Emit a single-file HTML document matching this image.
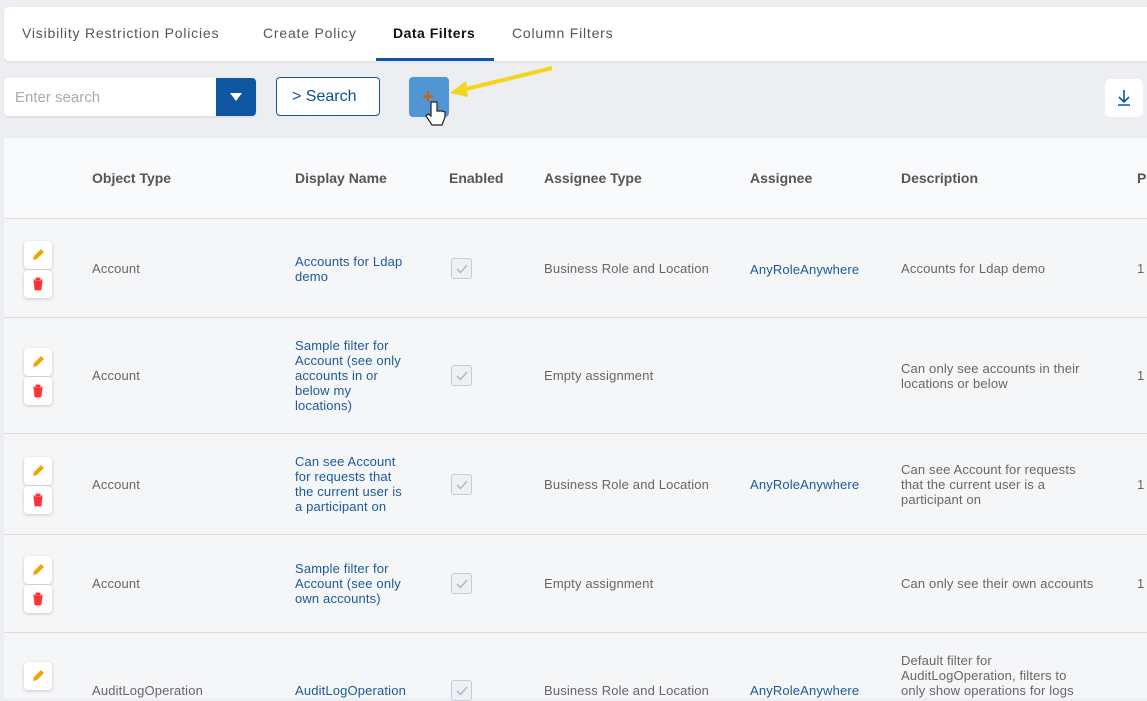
<!DOCTYPE html>
<html><head><meta charset="utf-8"><style>
*{box-sizing:border-box;margin:0;padding:0}
body{width:1147px;height:691px;overflow:hidden;background:#eceef2;font-family:"Liberation Sans",sans-serif;position:relative;color:#666}
.abs{position:absolute}
.tabs{left:4px;top:7px;width:1150px;height:54px;background:#fff;border-radius:5px;box-shadow:0 1px 2px rgba(0,0,0,.08)}
.tab{position:absolute;top:18px;font-size:14px;color:#555;letter-spacing:.8px}
.table{left:4px;top:138px;width:1150px;height:560px;background:#f5f6f8}
.head{left:4px;top:138px;width:1150px;height:81px;background:#f9fafc;border-bottom:1px solid #ddd}
.h{position:absolute;top:170px;font-size:14px;font-weight:bold;color:#555}
.row{position:absolute;left:4px;width:1150px;border-bottom:1px solid #ddd}
.t{position:absolute;font-size:13px;line-height:15px;color:#666;letter-spacing:.15px}
.l{color:#1a5a9a}
.btn{position:absolute;left:24px;width:28px;height:28px;background:#fff;border-radius:4px;box-shadow:0 1px 3px rgba(0,0,0,.2);display:flex;align-items:center;justify-content:center}
.cb{position:absolute;left:451px;width:21px;height:21px;border:1px solid #c8ccd2;border-radius:3px;background:#eef0f3;display:flex;align-items:center;justify-content:center}
</style></head><body>
<div class="abs tabs"></div>
<div class="tab" style="left:22px;top:25px">Visibility Restriction Policies</div>
<div class="tab" style="left:263px;top:25px">Create Policy</div>
<div class="tab" style="left:393px;top:25px;font-weight:bold;color:#111;letter-spacing:.5px">Data Filters</div>
<div class="abs" style="left:376px;top:58px;width:118px;height:3px;background:#0e57a0"></div>
<div class="tab" style="left:512px;top:25px">Column Filters</div>

<div class="abs" style="left:4px;top:78px;width:252px;height:38px;background:#fff;border-radius:4px;box-shadow:0 1px 2px rgba(0,0,0,.1)"></div>
<div class="abs" style="left:15px;top:89px;font-size:15px;color:#aaa">Enter search</div>
<div class="abs" style="left:216px;top:78px;width:40px;height:38px;background:#0e57a0;border-radius:0 4px 4px 0"></div>
<svg class="abs" style="left:230px;top:93px" width="12" height="9"><path d="M0 0h12L6 8z" fill="#fff"/></svg>
<div class="abs" style="left:276px;top:77px;width:104px;height:39px;border:1px solid #0e57a0;border-radius:4px;background:#fff"></div>
<div class="abs" style="left:292px;top:88px;font-size:16px;color:#0e4f8f">&gt; Search</div>
<div class="abs" style="left:409px;top:77px;width:40px;height:40px;background:#5196d4;border-radius:4px"></div>
<div class="abs" style="left:422px;top:86px;font-size:20px;font-weight:bold;color:#c8620d">+</div>
<svg class="abs" style="left:425px;top:100px" width="22" height="30"><path d="M6 2v14l-3-2-2 2 6 9h10l3-8v-5l-3-1-3 0-2 0V2z" fill="#fff" stroke="#222" stroke-width="1.2"/></svg>
<svg class="abs" style="left:448px;top:62px" width="110" height="36"><path d="M104 6L14 28" stroke="#f2d51c" stroke-width="4"/><path d="M2 31l16-12 2 16z" fill="#f2d51c"/></svg>
<div class="abs" style="left:1105px;top:79px;width:38px;height:38px;background:#fff;border-radius:5px"></div>
<svg class="abs" style="left:1116px;top:89px" width="16" height="17"><path d="M8 1v11M3 8l5 5 5-5M2 16h12" stroke="#0e57a0" stroke-width="1.6" fill="none"/></svg>

<div class="abs table"></div>
<div class="abs head"></div>
<div class="h" style="left:92px">Object Type</div>
<div class="h" style="left:295px">Display Name</div>
<div class="h" style="left:449px">Enabled</div>
<div class="h" style="left:544px">Assignee Type</div>
<div class="h" style="left:750px">Assignee</div>
<div class="h" style="left:901px">Description</div>
<div class="h" style="left:1137px">P</div>

<div class="row" style="top:219px;height:99px"></div>
<div class="row" style="top:318px;height:116px"></div>
<div class="row" style="top:434px;height:101px"></div>
<div class="row" style="top:535px;height:98px"></div>

<!-- row1 -->
<div class="btn" style="top:241px"><svg width="14" height="14"><path d="M2 12l1-4 7-7 3 3-7 7z" fill="#f5a300"/></svg></div>
<div class="btn" style="top:270px"><svg width="12" height="14"><path d="M1 3h10M4 3V1h4v2M2 4h8l-1 9H3z" fill="#f33" stroke="#f33" stroke-width=".8"/></svg></div>
<div class="t" style="left:92px;top:261px">Account</div>
<div class="t l" style="left:295px;top:254px">Accounts for Ldap<br>demo</div>
<div class="cb" style="top:258px"><svg width="12" height="10"><path d="M1 5l3.5 3.5L11 1" stroke="#a9bfd6" stroke-width="1.6" fill="none"/></svg></div>
<div class="t" style="left:544px;top:261px">Business Role and Location</div>
<div class="t l" style="left:750px;top:262px">AnyRoleAnywhere</div>
<div class="t" style="left:901px;top:261px">Accounts for Ldap demo</div>
<div class="t" style="left:1137px;top:261px">1</div>

<!-- row2 -->
<div class="btn" style="top:348px"><svg width="14" height="14"><path d="M2 12l1-4 7-7 3 3-7 7z" fill="#f5a300"/></svg></div>
<div class="btn" style="top:377px"><svg width="12" height="14"><path d="M1 3h10M4 3V1h4v2M2 4h8l-1 9H3z" fill="#f33" stroke="#f33" stroke-width=".8"/></svg></div>
<div class="t" style="left:92px;top:368px">Account</div>
<div class="t l" style="left:295px;top:338px">Sample filter for<br>Account (see only<br>accounts in or<br>below my<br>locations)</div>
<div class="cb" style="top:365px"><svg width="12" height="10"><path d="M1 5l3.5 3.5L11 1" stroke="#a9bfd6" stroke-width="1.6" fill="none"/></svg></div>
<div class="t" style="left:544px;top:368px">Empty assignment</div>
<div class="t" style="left:901px;top:361px">Can only see accounts in their<br>locations or below</div>
<div class="t" style="left:1137px;top:368px">1</div>

<!-- row3 -->
<div class="btn" style="top:457px"><svg width="14" height="14"><path d="M2 12l1-4 7-7 3 3-7 7z" fill="#f5a300"/></svg></div>
<div class="btn" style="top:486px"><svg width="12" height="14"><path d="M1 3h10M4 3V1h4v2M2 4h8l-1 9H3z" fill="#f33" stroke="#f33" stroke-width=".8"/></svg></div>
<div class="t" style="left:92px;top:477px">Account</div>
<div class="t l" style="left:295px;top:454px">Can see Account<br>for requests that<br>the current user is<br>a participant on</div>
<div class="cb" style="top:474px"><svg width="12" height="10"><path d="M1 5l3.5 3.5L11 1" stroke="#a9bfd6" stroke-width="1.6" fill="none"/></svg></div>
<div class="t" style="left:544px;top:477px">Business Role and Location</div>
<div class="t l" style="left:750px;top:477px">AnyRoleAnywhere</div>
<div class="t" style="left:901px;top:462px">Can see Account for requests<br>that the current user is a<br>participant on</div>
<div class="t" style="left:1137px;top:477px">1</div>

<!-- row4 -->
<div class="btn" style="top:556px"><svg width="14" height="14"><path d="M2 12l1-4 7-7 3 3-7 7z" fill="#f5a300"/></svg></div>
<div class="btn" style="top:585px"><svg width="12" height="14"><path d="M1 3h10M4 3V1h4v2M2 4h8l-1 9H3z" fill="#f33" stroke="#f33" stroke-width=".8"/></svg></div>
<div class="t" style="left:92px;top:576px">Account</div>
<div class="t l" style="left:295px;top:561px">Sample filter for<br>Account (see only<br>own accounts)</div>
<div class="cb" style="top:573px"><svg width="12" height="10"><path d="M1 5l3.5 3.5L11 1" stroke="#a9bfd6" stroke-width="1.6" fill="none"/></svg></div>
<div class="t" style="left:544px;top:576px">Empty assignment</div>
<div class="t" style="left:901px;top:576px">Can only see their own accounts</div>
<div class="t" style="left:1137px;top:576px">1</div>

<!-- row5 -->
<div class="btn" style="top:662px"><svg width="14" height="14"><path d="M2 12l1-4 7-7 3 3-7 7z" fill="#f5a300"/></svg></div>
<div class="t" style="left:92px;top:683px">AuditLogOperation</div>
<div class="t l" style="left:295px;top:683px">AuditLogOperation</div>
<div class="cb" style="top:680px"><svg width="12" height="10"><path d="M1 5l3.5 3.5L11 1" stroke="#a9bfd6" stroke-width="1.6" fill="none"/></svg></div>
<div class="t" style="left:544px;top:683px">Business Role and Location</div>
<div class="t l" style="left:750px;top:683px">AnyRoleAnywhere</div>
<div class="t" style="left:901px;top:653px">Default filter for<br>AuditLogOperation, filters to<br>only show operations for logs</div>
</body></html>
